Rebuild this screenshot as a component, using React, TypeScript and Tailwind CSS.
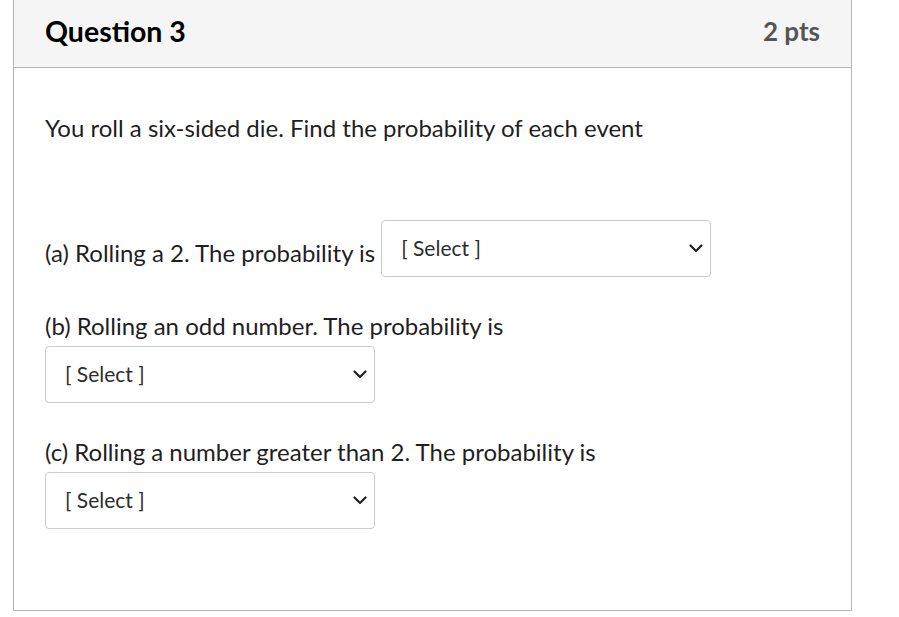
const selectBox = (
  <div className="flex h-[57px] w-[330px] items-center justify-between rounded-[4px] border border-[#c7cdd1] bg-white pl-[19px] pr-[6px] text-[21px] text-[#2d2d2d]">
    <span className="-mt-[2px]">[ Select ]</span>
    <svg width="14" height="9" viewBox="0 0 14 9" fill="none" className="mr-[1px]">
      <path d="M1.5 1.5 L7 7 L12.5 1.5" stroke="#222" strokeWidth="2.2" strokeLinecap="round" strokeLinejoin="round" />
    </svg>
  </div>
);

const Select = () => selectBox;

export default function App() {
  return (
    <div className="min-h-screen bg-white font-['Lato','Noto_Sans',sans-serif] text-[#1f1f1f]">
      <div className="ml-[13px] w-[839px] border-x border-b border-[#b5b5b5]">
        <div className="flex h-[68px] items-center justify-between border-b border-[#b5b5b5] bg-[#f5f5f5] px-[31px] pb-[4px]">
          <h2 className="text-[28.5px] font-bold text-black">Question 3</h2>
          <span className="text-[26px] font-bold text-[#555]">2 pts</span>
        </div>

        <div className="px-[31px] pb-[81px] text-[24px] leading-[33px]">
          <p className="mt-[43px]">You roll a six-sided die. Find the probability of each event</p>

          <div className="mt-[76px] flex items-start gap-[6px]">
            <span className="mt-[16px]">(a) Rolling a 2. The probability is</span>
            <Select />
          </div>

          <p className="mt-[32px]">(b) Rolling an odd number. The probability is</p>
          <div className="mt-[4px]">
            <Select />
          </div>

          <p className="mt-[32px]">(c) Rolling a number greater than 2. The probability is</p>
          <div className="mt-[4px]">
            <Select />
          </div>
        </div>
      </div>
    </div>
  );
}
